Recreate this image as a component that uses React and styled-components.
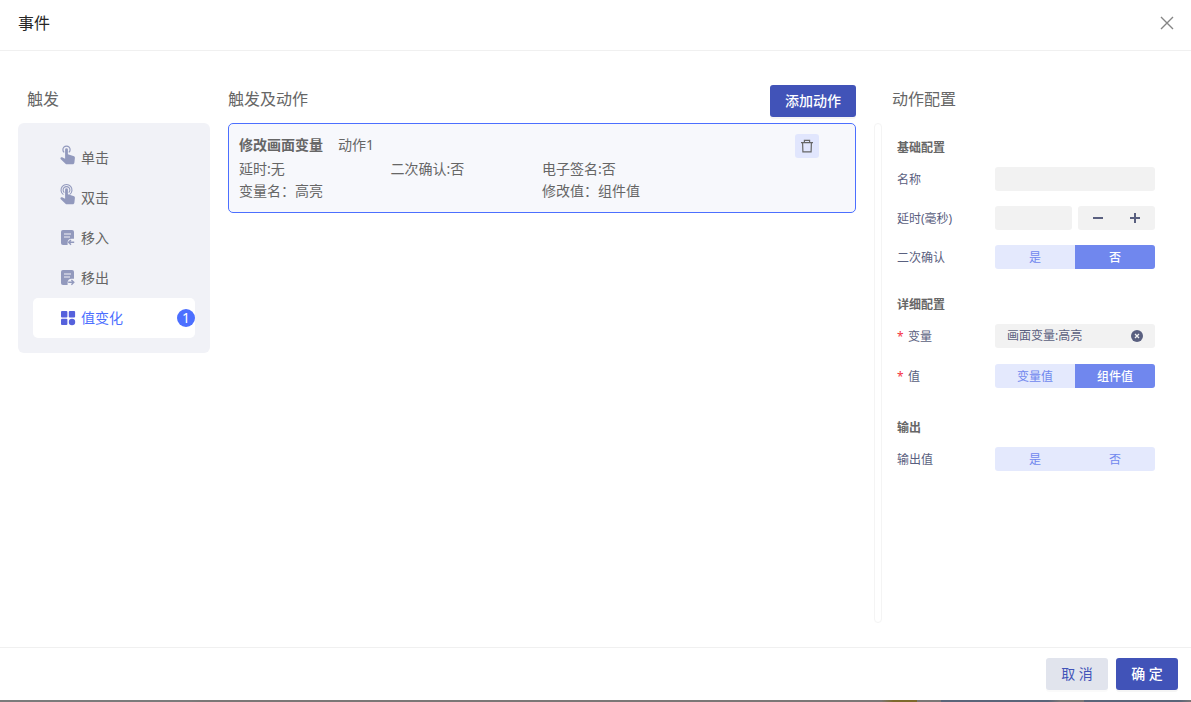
import React, { useState } from 'react';
import styled, { createGlobalStyle } from 'styled-components';

const triggers = [
  { key: 'click', label: '单击' },
  { key: 'dblclick', label: '双击' },
  { key: 'enter', label: '移入' },
  { key: 'leave', label: '移出' },
  { key: 'change', label: '值变化', count: 1 },
];

const HAND = 'M5.1 4.6a1.4 1.4 0 0 1 2.8 0V9.2l5.4 1.7c1.2.3 1.7 1 1.6 2l-.5 4.6c-.1 1.1-.8 1.8-1.8 1.8H7c-.7 0-1.1-.2-1.5-.6L.8 14.2c-.5-.6-.4-1.2.1-1.6.5-.4 1.1-.4 1.7-.1l2.5 1.2z';

const TriggerIcon = ({ type }) => {
  if (type === 'click' || type === 'dblclick') {
    return (
      <svg width="16" height="28" viewBox="0 -1 16 28" fill="#9299bd" aria-hidden="true">
        <path d={HAND} />
        {type === 'click' ? (
          <path d="M4.2 7.4a3.6 3.6 0 1 1 4.6 0" fill="none" stroke="#9299bd" strokeWidth="1.2" />
        ) : (
          <g fill="none" stroke="#9299bd" strokeWidth="1.1">
            <path d="M4.3 7.6a3.4 3.4 0 1 1 4.4 0" />
            <path d="M3.4 9.6a5.5 5.5 0 1 1 6.2 0" />
          </g>
        )}
      </svg>
    );
  }
  if (type === 'change') {
    return (
      <svg width="16" height="16" viewBox="0 0 16 16" fill="#5561dc" aria-hidden="true">
        <rect x="1" y="1" width="6.4" height="6.4" rx="1" />
        <rect x="8.8" y="1" width="6.3" height="6.4" rx="1" />
        <rect x="1" y="8.8" width="6.4" height="6.3" rx="1" />
        <circle cx="12" cy="12" r="3.2" />
      </svg>
    );
  }
  return (
    <svg width="16" height="16" viewBox="0 0 16 16" aria-hidden="true">
      <rect x="1" y="0" width="13" height="15" rx="2" fill="#9299bd" />
      <path d="M4 4h7M4 7h6" stroke="#f1f2f7" strokeWidth="1.2" />
      <path d="M7.6 15.5v-3a4 4 0 0 1 4-3.8h3v6.8z" fill="#f1f2f7" />
      <path
        d={type === 'enter' ? 'M14.2 12.3H8.6M11 9.9l-2.4 2.4 2.4 2.4' : 'M8.2 12.3h5.6M11.4 9.9l2.4 2.4-2.4 2.4'}
        fill="none"
        stroke="#9299bd"
        strokeWidth="1.4"
      />
    </svg>
  );
};

const Segmented = ({ labelId, options, value, onChange }) => (
  <Segment role="group" aria-labelledby={labelId}>
    {options.map((option) => (
      <SegmentButton
        key={option}
        type="button"
        $active={option === value}
        aria-pressed={option === value}
        onClick={() => onChange(option)}
      >
        {option}
      </SegmentButton>
    ))}
  </Segment>
);

const App = () => {
  const [active, setActive] = useState('change');
  const [name, setName] = useState('');
  const [delay, setDelay] = useState('');
  const [confirm, setConfirm] = useState('否');
  const [variable, setVariable] = useState('画面变量:高亮');
  const [valueType, setValueType] = useState('组件值');
  const [output, setOutput] = useState('');

  const stepDelay = (step) => {
    setDelay((prev) => String(Math.max(0, Number(prev) + step)));
  };

  return (
    <Page>
      <GlobalStyle />
      <Dialog role="dialog" aria-labelledby="dialog-title">
        <Header>
          <Title id="dialog-title">事件</Title>
          <CloseButton type="button" aria-label="关闭">
            <svg width="14" height="14" viewBox="0 0 14 14" stroke="#858585" strokeWidth="1.4">
              <path d="M1 1l12 12M13 1L1 13" />
            </svg>
          </CloseButton>
        </Header>

        <Body>
          <TriggerColumn>
            <ColumnHead $indent>
              <Heading>触发</Heading>
            </ColumnHead>
            <TriggerList>
              {triggers.map((item) => (
                <TriggerItem
                  key={item.key}
                  type="button"
                  $active={active === item.key}
                  onClick={() => setActive(item.key)}
                >
                  <TriggerIcon type={item.key} />
                  <TriggerName>{item.label}</TriggerName>
                  {item.count && <Badge>{item.count}</Badge>}
                </TriggerItem>
              ))}
            </TriggerList>
          </TriggerColumn>

          <ActionColumn>
            <ColumnHead>
              <Heading>触发及动作</Heading>
              <Button type="button" $primary>添加动作</Button>
            </ColumnHead>
            <ActionCard>
              <ActionTop>
                <ActionType>修改画面变量</ActionType>
                <ActionName>动作1</ActionName>
                <DeleteButton type="button" aria-label="删除">
                  <svg width="14" height="14" viewBox="0 0 14 14" fill="none" stroke="#666" strokeWidth="1.2">
                    <path d="M1 3.6h12M4.4 3.4V1.4h5.2v2M2.6 3.8l.3 9.1h8.2l.3-9.1" />
                  </svg>
                </DeleteButton>
              </ActionTop>
              <ActionInfo>
                <span>延时:无</span>
                <span>二次确认:否</span>
                <WideInfo>电子签名:否</WideInfo>
                <WideInfo>变量名：高亮</WideInfo>
                <WideInfo>修改值：组件值</WideInfo>
              </ActionInfo>
            </ActionCard>
          </ActionColumn>

          <Divider />

          <ConfigColumn>
            <ColumnHead>
              <Heading>动作配置</Heading>
            </ColumnHead>
            <Config>
              <Section>
                <SectionTitle>基础配置</SectionTitle>
                <Field>
                  <Label htmlFor="name">名称</Label>
                  <Control>
                    <Input id="name" value={name} onChange={(e) => setName(e.target.value)} />
                  </Control>
                </Field>
                <Field>
                  <Label htmlFor="delay">延时(毫秒)</Label>
                  <Control>
                    <Input id="delay" value={delay} onChange={(e) => setDelay(e.target.value)} />
                    <Stepper>
                      <StepButton type="button" aria-label="减少" onClick={() => stepDelay(-1)}>
                        <svg width="10" height="10" viewBox="0 0 10 10" stroke="#5a6080" strokeWidth="2">
                          <path d="M0 5h10" />
                        </svg>
                      </StepButton>
                      <StepButton type="button" aria-label="增加" onClick={() => stepDelay(1)}>
                        <svg width="10" height="10" viewBox="0 0 10 10" stroke="#5a6080" strokeWidth="2">
                          <path d="M0 5h10M5 0v10" />
                        </svg>
                      </StepButton>
                    </Stepper>
                  </Control>
                </Field>
                <Field>
                  <Label as="span" id="confirm-label">二次确认</Label>
                  <Segmented labelId="confirm-label" options={['是', '否']} value={confirm} onChange={setConfirm} />
                </Field>
              </Section>

              <Section $loose>
                <SectionTitle>详细配置</SectionTitle>
                <Field>
                  <Label htmlFor="variable"><Star>*</Star>变量</Label>
                  <Control>
                    <Picker>
                      <PickerInput id="variable" value={variable} readOnly />
                      <ClearButton type="button" aria-label="清除" onClick={() => setVariable('')}>
                        <svg width="12" height="12" viewBox="0 0 12 12">
                          <circle cx="6" cy="6" r="6" fill="#5a6080" />
                          <path d="M4 4l4 4M8 4L4 8" stroke="#f2f2f2" strokeWidth="1.3" />
                        </svg>
                      </ClearButton>
                    </Picker>
                  </Control>
                </Field>
                <Field>
                  <Label as="span" id="value-label"><Star>*</Star>值</Label>
                  <Segmented labelId="value-label" options={['变量值', '组件值']} value={valueType} onChange={setValueType} />
                </Field>
              </Section>

              <Section>
                <SectionTitle>输出</SectionTitle>
                <Field>
                  <Label as="span" id="output-label">输出值</Label>
                  <Segmented labelId="output-label" options={['是', '否']} value={output} onChange={setOutput} />
                </Field>
              </Section>
            </Config>
          </ConfigColumn>
        </Body>

        <Footer>
          <Button type="button">取 消</Button>
          <Button type="button" $primary>确 定</Button>
        </Footer>
      </Dialog>
      <Backdrop />
    </Page>
  );
};

// Styled components
const GlobalStyle = createGlobalStyle`
  * {
    box-sizing: border-box;
  }

  body {
    margin: 0;
    background: #fff;
    color: #666;
    font-family: "Noto Sans", "Noto Sans CJK SC", sans-serif;
    font-size: 14px;
    line-height: 22px;
  }

  button,
  input {
    margin: 0;
    padding: 0;
    border: none;
    background: none;
    color: inherit;
    font: inherit;
  }

  button {
    cursor: pointer;
  }

  svg {
    display: block;
    flex-shrink: 0;
  }
`;

const Page = styled.div`
  display: flex;
  flex-direction: column;
  min-height: 100vh;
`;

const Dialog = styled.div`
  display: flex;
  flex: 1;
  flex-direction: column;
  background: #fff;
`;

const Backdrop = styled.div`
  height: 2px;
  background: linear-gradient(
    to right,
    #7b7b7b 16%,
    #7b7776 17% 74%,
    #7d6a2c 75% 77%,
    #7b7776 77% 79%,
    #5a6579 79% 88%,
    #7b7776 89% 91%,
    #5a6579 91% 99%,
    #7b7776 100%
  );
`;

const Header = styled.header`
  display: flex;
  align-items: center;
  justify-content: space-between;
  padding: 12px 16px 16px 18px;
  border-bottom: 1px solid #f0f0f0;
`;

const Title = styled.h1`
  margin: 0;
  color: #262626;
  font-size: 16px;
  font-weight: 400;
  line-height: 22px;
`;

const CloseButton = styled.button`
  padding: 1px;
`;

const Body = styled.main`
  display: flex;
  flex: 1;
  padding: 34px 36px 24px 18px;
`;

const TriggerColumn = styled.section`
  flex: 0 0 192px;
  margin-right: 18px;
`;

const ActionColumn = styled.section`
  flex: 1;
  margin-right: 18px;
`;

const ConfigColumn = styled.section`
  margin-left: 10px;
`;

const ColumnHead = styled.div`
  display: flex;
  align-items: flex-start;
  justify-content: space-between;
  height: 32px;
  margin-bottom: 6px;
  padding-left: ${(props) => (props.$indent ? '9px' : '0')};
`;

const Heading = styled.h2`
  margin: 0;
  font-size: 16px;
  font-weight: 400;
  line-height: 28px;
`;

const TriggerList = styled.div`
  padding: 15px;
  border-radius: 6px;
  background: #f1f2f7;
`;

const TriggerItem = styled.button`
  display: flex;
  align-items: center;
  gap: 5px;
  width: 100%;
  height: 40px;
  padding-left: 27px;
  border-radius: 5px;
  background: ${(props) => (props.$active ? '#fff' : 'transparent')};
  color: ${(props) => (props.$active ? '#4c6fff' : '#666')};
  text-align: left;
`;

const TriggerName = styled.span`
  flex: 1;
`;

const Badge = styled.span`
  width: 18px;
  height: 18px;
  border-radius: 50%;
  background: #4c6fff;
  color: #fff;
  line-height: 18px;
  text-align: center;
`;

const Button = styled.button`
  min-width: 62px;
  height: 32px;
  padding: 0 15px;
  border-radius: 3px;
  background: ${(props) => (props.$primary ? '#4153b8' : '#e1e4ed')};
  box-shadow: 0 2px 0 rgba(0, 0, 0, ${(props) => (props.$primary ? 0.04 : 0.02)});
  color: ${(props) => (props.$primary ? '#fff' : '#4153b8')};
  font-weight: ${(props) => (props.$primary ? 500 : 400)};
`;

const ActionCard = styled.article`
  padding: 10px;
  border: 1px solid #4c6fff;
  border-radius: 5px;
  background: #f7f8fc;
`;

const ActionTop = styled.div`
  display: flex;
  align-items: flex-start;
  height: 24px;
  padding-right: 26px;
`;

const ActionType = styled.strong`
  margin-right: 15px;
`;

const ActionName = styled.span`
  flex: 1;
`;

const DeleteButton = styled.button`
  display: flex;
  align-items: center;
  justify-content: center;
  width: 24px;
  height: 24px;
  border-radius: 3px;
  background: #e1e6fd;
`;

const ActionInfo = styled.div`
  display: grid;
  grid-template-columns: repeat(4, 1fr);
`;

const WideInfo = styled.span`
  grid-column: span 2;
`;

const Divider = styled.div`
  width: 8px;
  margin-top: 38px;
  border: 1px solid #f4f4f4;
  border-radius: 4px;
`;

const Config = styled.div`
  padding: 15px 0 0 5px;
  font-size: 12px;
`;

const SectionTitle = styled.h3`
  margin: 0 0 9px;
  font-size: 12px;
  font-weight: 700;
  line-height: 20px;
`;

const Field = styled.div`
  display: flex;
  align-items: center;
  color: #5a6080;
`;

const Section = styled.div`
  margin-bottom: ${(props) => (props.$loose ? '30px' : '26px')};

  ${Field} + ${Field} {
    margin-top: ${(props) => (props.$loose ? '16px' : '15px')};
  }
`;

const Label = styled.label`
  width: 98px;
  padding-top: 2px;
`;

const Star = styled.span`
  display: inline-block;
  width: 11px;
  color: #f5333f;
`;

const Control = styled.div`
  display: grid;
  grid-auto-columns: minmax(0, 1fr);
  grid-auto-flow: column;
  gap: 6px;
  width: 160px;
`;

const Input = styled.input`
  min-width: 0;
  height: 24px;
  padding: 0 12px;
  border-radius: 3px;
  background: #f2f2f2;
`;

const Stepper = styled.div`
  display: flex;
  padding: 0 1px;
  border-radius: 3px;
  background: #f2f2f2;
`;

const StepButton = styled.button`
  display: flex;
  flex: 1;
  align-items: center;
  justify-content: center;
`;

const Picker = styled.div`
  display: flex;
  align-items: center;
  height: 24px;
  padding: 0 12px;
  border-radius: 3px;
  background: #f2f2f2;
`;

const PickerInput = styled.input`
  flex: 1;
  min-width: 0;
`;

const ClearButton = styled.button`
  flex-shrink: 0;
`;

const Segment = styled.div`
  display: flex;
  width: 160px;
  height: 24px;
  overflow: hidden;
  border-radius: 3px;
  background: #e4e9fd;
`;

const SegmentButton = styled.button`
  flex: 1;
  padding-top: 2px;
  background: ${(props) => (props.$active ? '#7087ee' : 'transparent')};
  color: ${(props) => (props.$active ? '#fff' : '#7087ee')};
  font-weight: ${(props) => (props.$active ? 500 : 400)};
`;

const Footer = styled.footer`
  display: flex;
  justify-content: flex-end;
  gap: 8px;
  padding: 10px 13px;
  border-top: 1px solid #f0f0f0;
`;

export default App;
